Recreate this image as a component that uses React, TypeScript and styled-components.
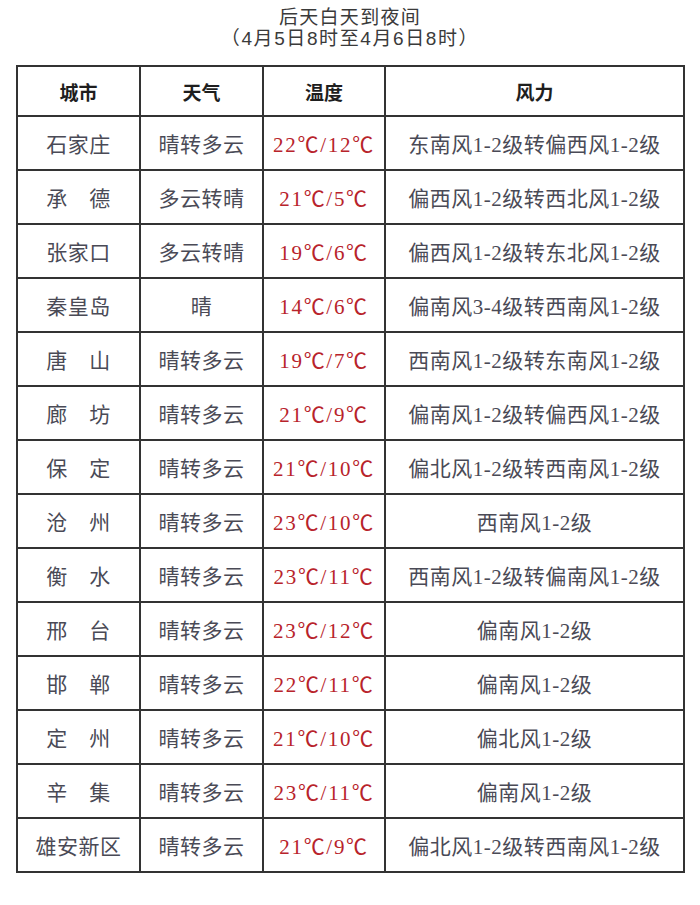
import React from 'react';
import styled, { createGlobalStyle } from 'styled-components';

const GlobalStyle = createGlobalStyle`
  html, body {
    margin: 0;
    padding: 0;
    background: #fff;
  }
  body {
    font-family: "Liberation Serif", "Noto Sans CJK SC", serif;
  }
`;

const Page = styled.div`
  width: 700px;
  height: 905px;
  padding-top: 4px;
  box-sizing: border-box;
`;

const Heading = styled.div`
  text-align: center;
  color: #3a3a3a;
  font-family: "Noto Sans CJK SC", sans-serif;
  font-size: 19px;
  line-height: 23px;
  letter-spacing: 1.3px;
`;

const SubHeading = styled(Heading)`
  font-family: "Liberation Sans", "Noto Sans CJK SC", sans-serif;
  letter-spacing: 1.6px;
`;

const Table = styled.table`
  margin: 15px 0 0 16px;
  width: 669px;
  border-collapse: collapse;
  table-layout: fixed;
  border: 2px solid #333;
`;

const HeadCell = styled.th`
  height: 48px;
  padding: 0;
  border: 2px solid #333;
  font-family: "Noto Sans CJK SC", sans-serif;
  font-weight: 700;
  font-size: 19px;
  color: #1e1e1e;
  text-align: center;
`;

const Cell = styled.td<{ $red?: boolean }>`
  height: 52px;
  padding: 0;
  border: 2px solid #333;
  text-align: center;
  white-space: nowrap;
  font-size: 21px;
  letter-spacing: ${(p) => (p.$red ? '1.7px' : '0.5px')};
  color: ${(p) => (p.$red ? '#b8232b' : '#4a4a56')};
`;

const Degree = styled.span`
  font-family: "Noto Sans CJK SC", sans-serif;
`;

type Row = { city: string; weather: string; temp: [number, number]; wind: string };

const rows: Row[] = [
  { city: '石家庄', weather: '晴转多云', temp: [22, 12], wind: '东南风1-2级转偏西风1-2级' },
  { city: '承　德', weather: '多云转晴', temp: [21, 5], wind: '偏西风1-2级转西北风1-2级' },
  { city: '张家口', weather: '多云转晴', temp: [19, 6], wind: '偏西风1-2级转东北风1-2级' },
  { city: '秦皇岛', weather: '晴', temp: [14, 6], wind: '偏南风3-4级转西南风1-2级' },
  { city: '唐　山', weather: '晴转多云', temp: [19, 7], wind: '西南风1-2级转东南风1-2级' },
  { city: '廊　坊', weather: '晴转多云', temp: [21, 9], wind: '偏南风1-2级转偏西风1-2级' },
  { city: '保　定', weather: '晴转多云', temp: [21, 10], wind: '偏北风1-2级转西南风1-2级' },
  { city: '沧　州', weather: '晴转多云', temp: [23, 10], wind: '西南风1-2级' },
  { city: '衡　水', weather: '晴转多云', temp: [23, 11], wind: '西南风1-2级转偏南风1-2级' },
  { city: '邢　台', weather: '晴转多云', temp: [23, 12], wind: '偏南风1-2级' },
  { city: '邯　郸', weather: '晴转多云', temp: [22, 11], wind: '偏南风1-2级' },
  { city: '定　州', weather: '晴转多云', temp: [21, 10], wind: '偏北风1-2级' },
  { city: '辛　集', weather: '晴转多云', temp: [23, 11], wind: '偏南风1-2级' },
  { city: '雄安新区', weather: '晴转多云', temp: [21, 9], wind: '偏北风1-2级转西南风1-2级' },
];

export default function App() {
  return (
    <>
      <GlobalStyle />
      <Page>
        <Heading>后天白天到夜间</Heading>
        <SubHeading>（4月5日8时至4月6日8时）</SubHeading>
        <Table>
          <colgroup>
            <col style={{ width: 123 }} />
            <col style={{ width: 123 }} />
            <col style={{ width: 122 }} />
            <col />
          </colgroup>
          <thead>
            <tr>
              <HeadCell>城市</HeadCell>
              <HeadCell>天气</HeadCell>
              <HeadCell>温度</HeadCell>
              <HeadCell>风力</HeadCell>
            </tr>
          </thead>
          <tbody>
            {rows.map((r) => (
              <tr key={r.city}>
                <Cell>{r.city}</Cell>
                <Cell>{r.weather}</Cell>
                <Cell $red>
                  {r.temp[0]}
                  <Degree>℃</Degree>/{r.temp[1]}
                  <Degree>℃</Degree>
                </Cell>
                <Cell>{r.wind}</Cell>
              </tr>
            ))}
          </tbody>
        </Table>
      </Page>
    </>
  );
}
